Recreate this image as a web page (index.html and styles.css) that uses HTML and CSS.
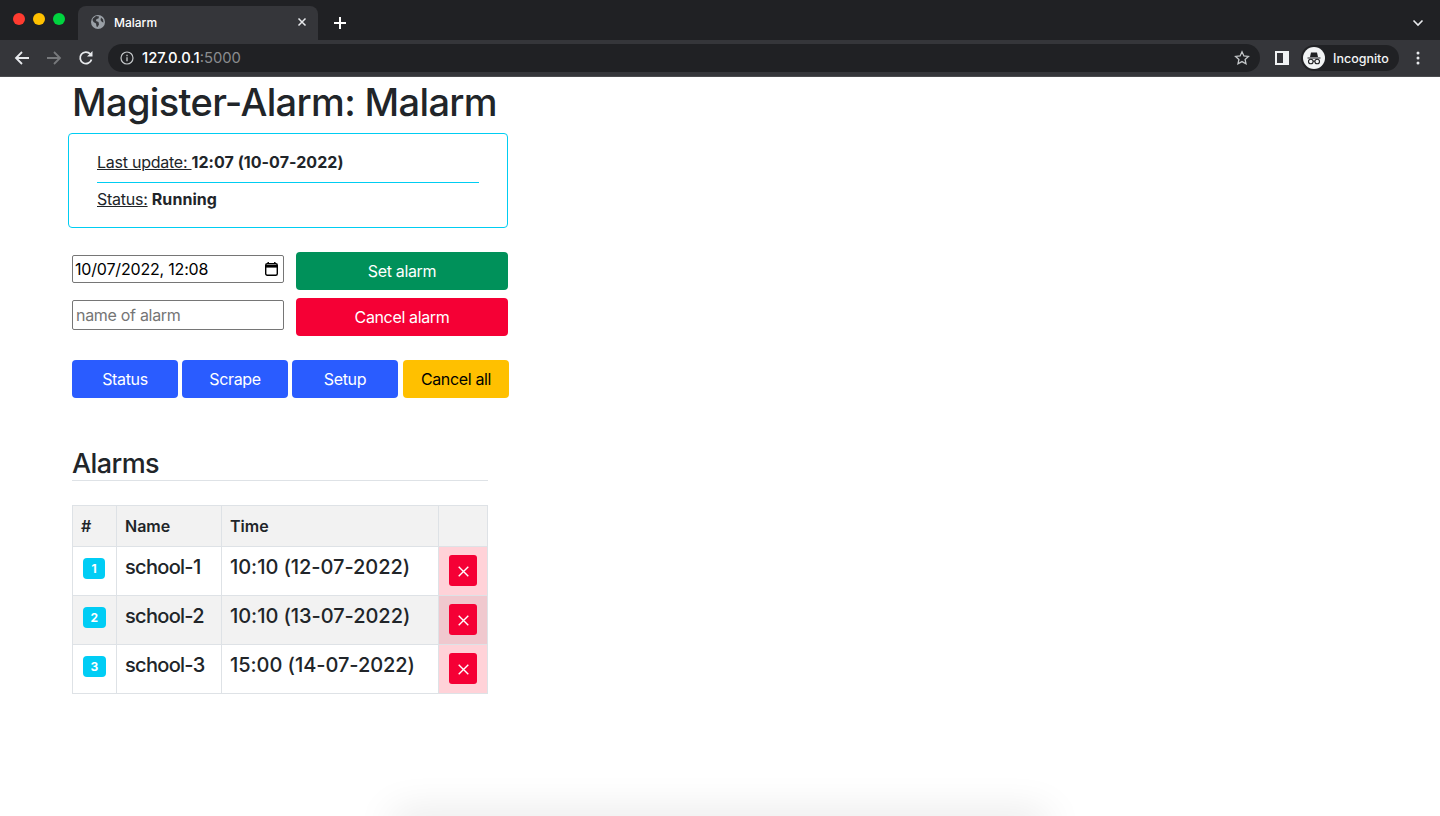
FILE: index.html
```html
<!DOCTYPE html>
<html lang="en">
<head>
<meta charset="utf-8">
<title>Malarm</title>
<link rel="stylesheet" href="styles.css">
</head>
<body>
<header class="chrome">
  <div class="tabbar">
    <div class="lights"><span class="light red"></span><span class="light yellow"></span><span class="light green"></span></div>
    <div class="tab">
      <svg class="globe" width="16" height="16" viewBox="0 0 16 16"><circle cx="8" cy="8" r="7" fill="#9aa0a6"/><path d="M3 4.500l3-2.500 3 .5-.5 2-2 .5-.5 2 2.500 1 .5 2.500-1.500 2.500-1-.5-.5-3-2.500-1.500-1-2z M11 3.500l2 2 .5 3-1.500-.5-1.500-2z" fill="#35363a"/></svg>
      <span class="tab-title">Malarm</span>
      <svg class="tab-x" width="10" height="10" viewBox="0 0 10 10"><path d="M1.500 1.500l7 7M8.500 1.500l-7 7" stroke="#e8eaed" stroke-width="1.500" fill="none"/></svg>
    </div>
    <svg class="plus" width="14" height="14" viewBox="0 0 14 14"><path d="M7 1v12M1 7h12" stroke="#fff" stroke-width="2" fill="none"/></svg>
    <svg class="chev" width="12" height="8" viewBox="0 0 12 8"><path d="M1.500 1.500L6 6l4.500-4.500" stroke="#e8eaed" stroke-width="1.600" fill="none"/></svg>
  </div>
  <div class="toolbar">
    <svg class="nav" width="16" height="16" viewBox="0 0 16 16"><path d="M15 8H2M8 2L2 8l6 6" stroke="#e8eaed" stroke-width="1.800" fill="none"/></svg>
    <svg class="nav" width="16" height="16" viewBox="0 0 16 16"><path d="M1 8h13M8 2l6 6-6 6" stroke="#77797c" stroke-width="1.800" fill="none"/></svg>
    <svg class="nav" width="16" height="16" viewBox="0 0 16 16"><path d="M13.500 9.500A5.800 5.800 0 1 1 12.300 4" stroke="#e8eaed" stroke-width="1.800" fill="none"/><path d="M14.500 1v5.500H9z" fill="#e8eaed"/></svg>
    <div class="omnibox">
      <svg width="14" height="14" viewBox="0 0 14 14"><circle cx="7" cy="7" r="6" stroke="#c4c7c9" stroke-width="1.200" fill="none"/><path d="M7 6.200v4M7 3.800v1.400" stroke="#c4c7c9" stroke-width="1.300"/></svg>
      <span class="url"><span class="host">127.0.0.1</span><span class="port">:5000</span></span>
      <svg class="star" width="16" height="16" viewBox="0 0 16 16"><path d="M8 1.800l1.900 4.100 4.500.5-3.300 3 .9 4.400L8 11.600l-4 2.200.9-4.400-3.300-3 4.500-.5z" stroke="#c4c7c9" stroke-width="1.300" fill="none"/></svg>
    </div>
    <svg class="panel" width="14" height="14" viewBox="0 0 14 14"><path d="M0 0h14v14H0zM2 2v10h6V2z" fill="#f1f3f4" fill-rule="evenodd"/></svg>
    <div class="profile">
      <span class="avatar"><svg width="22" height="22" viewBox="0 0 22 22"><circle cx="11" cy="11" r="11" fill="#f1f3f4"/><path d="M4.500 10.500h13v1h-13zM7 10l1-4.500h6L15 10z" fill="#202124"/><circle cx="7.800" cy="14.500" r="2.300" stroke="#202124" stroke-width="1.100" fill="none"/><circle cx="14.200" cy="14.500" r="2.300" stroke="#202124" stroke-width="1.100" fill="none"/><path d="M10 14.200h2" stroke="#202124"/></svg></span>
      <span class="profile-name">Incognito</span>
    </div>
    <svg class="dots" width="4" height="14" viewBox="0 0 4 14"><circle cx="2" cy="2" r="1.500" fill="#e8eaed"/><circle cx="2" cy="7" r="1.500" fill="#e8eaed"/><circle cx="2" cy="12" r="1.500" fill="#e8eaed"/></svg>
  </div>
</header>

<main class="page">
  <h1>Magister-Alarm: Malarm</h1>
  <section class="info">
    <p class="info-line"><span class="label">Last update: </span><b>12:07 (10-07-2022)</b></p>
    <hr class="info-rule">
    <p class="info-line"><span class="label">Status:</span> <b>Running</b></p>
  </section>

  <form class="alarm-form">
    <label class="field field-date">
      <input class="date-text" type="text" value="10/07/2022, 12:08">
      <svg class="cal" width="13" height="14" viewBox="0 0 13 14"><path d="M3.200 0v2M9.800 0v2" stroke="#000" stroke-width="1.400"/><rect x=".7" y="1.700" width="11.600" height="11.600" rx="1.500" fill="none" stroke="#000" stroke-width="1.400"/><path d="M1 3h11v2.600H1z" fill="#000"/></svg>
    </label>
    <button class="btn btn-green" type="button">Set alarm</button>
    <input class="field field-name" type="text" placeholder="name of alarm">
    <button class="btn btn-red" type="button">Cancel alarm</button>
  </form>

  <nav class="actions">
    <button class="btn btn-blue" type="button">Status</button>
    <button class="btn btn-blue" type="button">Scrape</button>
    <button class="btn btn-blue" type="button">Setup</button>
    <button class="btn btn-yellow" type="button">Cancel all</button>
  </nav>

  <h2>Alarms</h2>
  <table class="alarms">
    <thead>
      <tr><th class="c-num">#</th><th class="c-name">Name</th><th class="c-time">Time</th><th class="c-del"></th></tr>
    </thead>
    <tbody>
      <tr><td class="num"><span class="badge">1</span></td><td class="name">school-1</td><td>10:10 (12-07-2022)</td><td class="del"><button class="x" type="button"><svg width="11" height="11" viewBox="0 0 11 11"><path d="M.7.700l9.600 9.600M10.300.700L.7 10.300" stroke="#fff" stroke-width="1.400" fill="none"/></svg></button></td></tr>
      <tr class="odd"><td class="num"><span class="badge">2</span></td><td class="name">school-2</td><td>10:10 (13-07-2022)</td><td class="del"><button class="x" type="button"><svg width="11" height="11" viewBox="0 0 11 11"><path d="M.7.700l9.600 9.600M10.300.700L.7 10.300" stroke="#fff" stroke-width="1.400" fill="none"/></svg></button></td></tr>
      <tr><td class="num"><span class="badge">3</span></td><td class="name">school-3</td><td>15:00 (14-07-2022)</td><td class="del"><button class="x" type="button"><svg width="11" height="11" viewBox="0 0 11 11"><path d="M.7.700l9.600 9.600M10.300.700L.7 10.300" stroke="#fff" stroke-width="1.400" fill="none"/></svg></button></td></tr>
    </tbody>
  </table>
</main>
<div class="bottom-shadow"></div>
</body>
</html>
```
FILE: styles.css
```css
* { box-sizing: border-box; }
html, body { margin: 0; height: 816px; overflow: hidden; background: #fff; }
body { font-family: Inter, "Liberation Sans", sans-serif; color: #212529; position: relative; }

.chrome { height: 77px; background: #35363a; border-bottom: 1px solid #4a4b4e; }
.tabbar { height: 40px; background: #202124; display: flex; align-items: flex-end; padding-left: 13px; position: relative; }
.lights { display: flex; gap: 8px; align-self: flex-start; margin-top: 13px; }
.light { width: 12px; height: 12px; border-radius: 50%; }
.red { background: #ff3b30; }
.yellow { background: #ffc100; }
.green { background: #00d43f; }
.tab { width: 240px; height: 34px; margin-left: 13px; background: #35363a; border-radius: 8px 8px 0 0; display: flex; align-items: center; padding: 0 11px 2px 12px; color: #fff; font-size: 12px; font-weight: 500; }
.tab-title { margin-left: 8px; flex: 1; }
.tab-x { display: block; }
.plus { margin: 0 0 10px 15px; }
.chev { position: absolute; right: 16px; top: 19px; }

.toolbar { height: 36px; display: flex; align-items: center; padding: 0 14px 0 14px; }
.nav { margin-right: 16px; flex: none; }
.omnibox { width: 1152px; height: 28px; margin-left: -2px; background: #202124; border-radius: 14px; display: flex; align-items: center; padding: 0 10px 0 12px; }
.url { margin-left: 8px; font-size: 14.800px; flex: 1; }
.host { color: #fff; font-weight: 500; }
.port { color: #8a8c8f; }
.panel { margin-left: 15px; flex: none; }
.profile { width: 98px; height: 26px; margin-left: 12px; background: #202124; border-radius: 13px; display: flex; align-items: center; padding-left: 2px; color: #f1f3f4; font-size: 12.500px; font-weight: 500; flex: none; }
.avatar { width: 22px; height: 22px; display: block; }
.avatar svg { display: block; }
.profile-name { margin-left: 8px; }
.dots { margin-left: 17px; flex: none; }

.page { padding-left: 72px; width: 520px; }
h1 { margin: 1px 0 7px; font-size: 38px; line-height: 48px; font-weight: 500; letter-spacing: -.65px; white-space: nowrap; }
.info { width: 440px; height: 95px; margin-left: -4px; border: 1px solid #00cdf2; border-radius: 4px; padding: 17px 28px 0; }
.info-line { margin: 0; font-size: 16px; line-height: 22px; letter-spacing: -.25px; }
.info-line b { letter-spacing: .05px; }
.label { text-decoration: underline; }
.info-rule { display: block; height: 1px; margin: 9px 0 5px; border: 0; background: #00cdf2; }

.alarm-form { display: grid; grid-template-columns: 212px 212px; column-gap: 12px; row-gap: 8px; margin-top: 24px; align-items: start; width: 436px; }
.field { width: 212px; height: 30px; margin-top: 2px; border: 1px solid #767676; border-radius: 2px; font: 16px Inter, "Liberation Sans", sans-serif; letter-spacing: -.3px; color: #000; background: #fff; }
.field-name { padding: 1px 3px; }
.field-name::placeholder { color: #757575; }
.field-date { height: 28px; margin-top: 3px; display: flex; align-items: center; padding: 0 5px 0 2px; letter-spacing: -.18px; }
.date-text { flex: 1; min-width: 0; border: 0; padding: 0; outline: 0; background: transparent; font: inherit; letter-spacing: inherit; color: #000; }
.cal { flex: none; display: block; }
.btn { height: 38px; border: 0; border-radius: 4px; font: 16px/24px Inter, "Liberation Sans", sans-serif; letter-spacing: -.35px; color: #fff; padding: 0; }
.btn-green { background: #00915a; }
.btn-red { background: #f50035; }
.btn-blue { background: #2a5cff; }
.btn-yellow { background: #ffc000; color: #000; }

.actions { display: flex; gap: 4px; margin-top: 24px; }
.actions .btn { width: 106px; flex: none; }
.actions .btn-yellow { margin-left: 1px; }

h2 { width: 416px; margin: 48px 0 24px; height: 35px; font-size: 27px; line-height: 36px; letter-spacing: -.6px; font-weight: 500; border-bottom: 1px solid #dee2e6; }

.alarms { width: 416px; border-collapse: collapse; table-layout: fixed; font-size: 20px; }
.alarms th, .alarms td { border: 1px solid #dee2e6; padding: 8px; text-align: left; }
.alarms th { height: 41px; font-size: 16px; line-height: 24px; font-weight: 600; background: #f2f2f2; }
.alarms td { height: 49px; padding-top: 4px; padding-bottom: 12px; line-height: 32px; font-weight: 500; letter-spacing: -.05px; }
.alarms td.name { letter-spacing: -.7px; }
.c-num { width: 44px; }
.c-name { width: 105px; }
.c-time { width: 217px; }
.c-del { width: 49px; }
.odd td { background: #f2f2f2; }
.alarms td.num { padding: 11px 0 0 10px; vertical-align: top; }
.badge { display: inline-block; vertical-align: top; min-width: 22px; height: 21px; padding: 0 7.500px; background: #00cdf5; border-radius: 4px; color: #fff; font-size: 12px; line-height: 21px; font-weight: 700; letter-spacing: 0; text-align: center; }
.alarms td.del { padding: 8px 0 0 10px; vertical-align: top; background: #ffd2d8; }
.alarms .odd td.del { background: #f0c8ce; }
.x { display: flex; align-items: center; justify-content: center; width: 28px; height: 31px; padding: 1px 0 0; border: 0; border-radius: 3px; background: #f50035; }

.bottom-shadow { position: absolute; left: 395px; width: 650px; top: 816px; height: 20px; box-shadow: 0 0 40px 2px rgba(0,0,0,.12); }
```
